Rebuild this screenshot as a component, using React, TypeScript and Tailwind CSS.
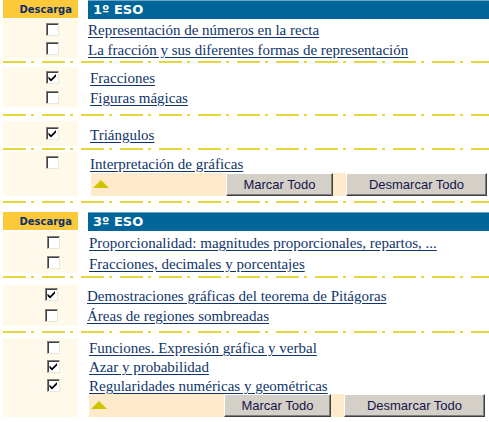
import React from 'react';

type Row = {
  label: string;
  checked?: boolean;
  h: string;
};

type Group = {
  rows: Row[];
  textPad: string;
  boxPad: string;
  buttons?: boolean;
  btnPad?: string;
};

const sans = "font-['DejaVu_Sans',Verdana,sans-serif]";

const CheckBox: React.FC<{ checked?: boolean }> = ({ checked }) => (
  <div className="w-[13px] h-[13px] bg-white border border-t-[#808080] border-l-[#808080] border-b-[#e8e6e0] border-r-[#e8e6e0] shadow-[inset_1px_1px_0_#404040] flex items-center justify-center">
    {checked && (
      <svg width="9" height="9" viewBox="0 0 9 9">
        <path d="M0.5 3.5 L3 6 L8 1 L8 3.5 L3 8.5 L0.5 6 Z" fill="#000" />
      </svg>
    )}
  </div>
);

const Separator: React.FC<{ className: string }> = ({ className }) => (
  <div
    className={`ml-[3px] h-[2px] bg-[repeating-linear-gradient(90deg,#e6d63c_0px,#e6d63c_23px,transparent_23px,transparent_28px,#e6d63c_28px,#e6d63c_31px,transparent_31px,transparent_39px)] ${className}`}
  />
);

const WinButton: React.FC<{ label: string; w: string }> = ({ label, w }) => (
  <button
    className={`${w} h-[23px] bg-[#d4d0c8] border border-t-white border-l-white border-b-[#404040] border-r-[#404040] shadow-[inset_-1px_-1px_0_#808080] font-['Liberation_Sans',Arial,sans-serif] text-[13px] text-[#14144a] leading-none`}
  >
    {label}
  </button>
);

const GroupBlock: React.FC<{ g: Group }> = ({ g }) => (
  <div className="flex flex-col">
    {g.rows.map((r) => (
      <div key={r.label} className={`flex ${r.h}`}>
        <div className={`w-[75px] ml-[3px] bg-[#fff9e9] flex items-center ${g.boxPad}`}>
          <CheckBox checked={r.checked} />
        </div>
        <div className={`flex items-center pt-[3px] ${g.textPad}`}>
          <a
            href="#"
            className="font-['Liberation_Serif','Times_New_Roman',serif] text-[15px] text-[#0f356a] underline decoration-[#0f356a] underline-offset-[2px] whitespace-nowrap"
          >
            {r.label}
          </a>
        </div>
      </div>
    ))}
    {g.buttons && (
      <div className="flex h-[23px]">
        <div className="w-[75px] ml-[3px] bg-[#fff9e9]" />
        <div className={`flex ${g.btnPad}`}>
          <div className="w-[135px] bg-[#ffebcc] flex items-center pl-[2px] pb-[1px]">
            <svg width="16" height="8" viewBox="0 0 16 8">
              <path d="M8 0 L16 8 L0 8 Z" fill="#d0c400" />
            </svg>
          </div>
          <WinButton label="Marcar Todo" w="w-[107px]" />
          <div className="w-[13px] bg-[#ffebcc]" />
          <WinButton label="Desmarcar Todo" w="w-[141px]" />
        </div>
      </div>
    )}
  </div>
);

const Header: React.FC<{ title: string; className?: string }> = ({ title, className }) => (
  <div className={`flex items-start ${className ?? ''}`}>
    <div
      className={`w-[75px] ml-[3px] h-[18px] bg-[#fcc93a] flex items-center justify-end pr-[6px] ${sans} text-[10px] font-bold text-[#0d2f6b]`}
    >
      Descarga
    </div>
    <div
      className={`flex-1 ml-[10px] h-[19px] bg-[#006699] border-t border-[#6fa6c8] flex items-center pl-[5px] ${sans} text-[13px] font-bold text-white`}
    >
      {title}
    </div>
  </div>
);

export default function App() {
  return (
    <div className="w-[489px] h-[422px] bg-white overflow-hidden">
      <Header title="1º ESO" />
      <GroupBlock
        g={{
          textPad: 'ml-[10px]',
          boxPad: 'pl-[43px]',
          rows: [
            { label: 'Representación de números en la recta', h: 'h-[20px]' },
            { label: 'La fracción y sus diferentes formas de representación', h: 'h-[19px]' },
          ],
        }}
      />
      <Separator className="mt-[3px] mb-[4px]" />
      <GroupBlock
        g={{
          textPad: 'ml-[12px]',
          boxPad: 'pl-[43px]',
          rows: [
            { label: 'Fracciones', checked: true, h: 'h-[20px]' },
            { label: 'Figuras mágicas', h: 'h-[20px]' },
          ],
        }}
      />
      <Separator className="mt-[7px] mb-[5px]" />
      <GroupBlock
        g={{
          textPad: 'ml-[12px]',
          boxPad: 'pl-[43px]',
          rows: [{ label: 'Triángulos', checked: true, h: 'h-[25px]' }],
        }}
      />
      <Separator className="mt-[2px] mb-[2px]" />
      <GroupBlock
        g={{
          textPad: 'ml-[12px]',
          boxPad: 'pl-[43px]',
          buttons: true,
          btnPad: 'ml-[13px]',
          rows: [{ label: 'Interpretación de gráficas', h: 'h-[21px]' }],
        }}
      />
      <Separator className="mt-[5px] mb-[9px]" />

      <Header title="3º ESO" className="h-[20px]" />
      <GroupBlock
        g={{
          textPad: 'ml-[11px]',
          boxPad: 'pl-[44px]',
          rows: [
            { label: 'Proporcionalidad: magnitudes proporcionales, repartos, ...', h: 'h-[20px]' },
            { label: 'Fracciones, decimales y porcentajes', h: 'h-[21px]' },
          ],
        }}
      />
      <Separator className="mt-[3px] mb-[7px]" />
      <GroupBlock
        g={{
          textPad: 'ml-[9px]',
          boxPad: 'pl-[42px]',
          rows: [
            { label: 'Demostraciones gráficas del teorema de Pitágoras', checked: true, h: 'h-[19px]' },
            { label: 'Áreas de regiones sombreadas', h: 'h-[22px]' },
          ],
        }}
      />
      <Separator className="mt-[5px] mb-[5px]" />
      <GroupBlock
        g={{
          textPad: 'ml-[11px]',
          boxPad: 'pl-[44px]',
          buttons: true,
          btnPad: 'ml-[11px]',
          rows: [
            { label: 'Funciones. Expresión gráfica y verbal', h: 'h-[18px]' },
            { label: 'Azar y probabilidad', checked: true, h: 'h-[20px]' },
            { label: 'Regularidades numéricas y geométricas', checked: true, h: 'h-[18px]' },
          ],
        }}
      />
    </div>
  );
}
